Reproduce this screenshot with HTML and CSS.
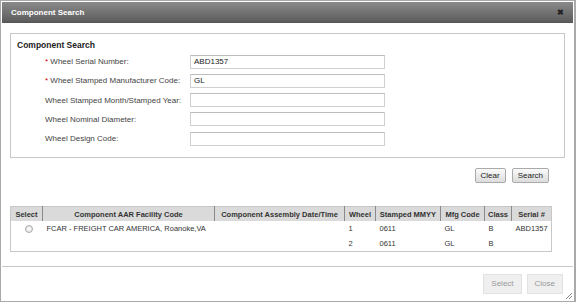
FILE: index.html
```html
<!DOCTYPE html>
<html lang="en">
<head>
  <meta charset="UTF-8" />
  <title>Component Search</title>
  <link rel="stylesheet" href="styles.css">
</head>
<body>
  <div class="dialog">
    <div class="titlebar">
      <span class="title">Component Search</span>
      <span class="close">&#10006;</span>
    </div>

    <div class="content">
      <fieldset class="search-box">
        <div class="legend">Component Search</div>
        <div class="row">
          <label><span class="req">*</span> Wheel Serial Number:</label>
          <input type="text" value="ABD1357" />
        </div>
        <div class="row">
          <label><span class="req">*</span> Wheel Stamped Manufacturer Code:</label>
          <input type="text" value="GL" />
        </div>
        <div class="row">
          <label>Wheel Stamped Month/Stamped Year:</label>
          <input type="text" />
        </div>
        <div class="row">
          <label>Wheel Nominal Diameter:</label>
          <input type="text" />
        </div>
        <div class="row">
          <label>Wheel Design Code:</label>
          <input type="text" />
        </div>
      </fieldset>

      <div class="actions">
        <button class="btn">Clear</button>
        <button class="btn">Search</button>
      </div>

      <table class="results">
        <thead>
          <tr>
            <th class="c-select">Select</th>
            <th class="c-aar">Component AAR Facility Code</th>
            <th class="c-date">Component Assembly Date/Time</th>
            <th class="c-wheel">Wheel</th>
            <th class="c-mmyy">Stamped MMYY</th>
            <th class="c-mfg">Mfg Code</th>
            <th class="c-class">Class</th>
            <th class="c-serial">Serial #</th>
          </tr>
        </thead>
        <tbody>
          <tr>
            <td class="radio-cell"><span class="radio"></span></td>
            <td>FCAR - FREIGHT CAR AMERICA, Roanoke,VA</td>
            <td></td>
            <td>1</td>
            <td>0611</td>
            <td>GL</td>
            <td>B</td>
            <td>ABD1357</td>
          </tr>
          <tr>
            <td></td>
            <td></td>
            <td></td>
            <td>2</td>
            <td>0611</td>
            <td>GL</td>
            <td>B</td>
            <td></td>
          </tr>
        </tbody>
      </table>
    </div>

    <div class="footer">
      <button class="btn btn-flat">Select</button>
      <button class="btn btn-flat">Close</button>
      <span class="grip"></span>
    </div>
  </div>
</body>
</html>
```

FILE: styles.css
```css
html, body {
  margin: 0;
  height: 100%;
  background: #fff;
}

body {
  font-family: 'Liberation Sans', Arial, sans-serif;
  font-size: 8px;
  color: #222;
}

.dialog {
  box-sizing: border-box;
  width: 576px;
  height: 302px;
  border: 1px solid #a9a9a9;
  border-right-width: 2px;
  padding: 1px;
  display: flex;
  flex-direction: column;
  position: relative;
}

.titlebar {
  height: 20px;
  background: linear-gradient(#8a8a8a, #5c5c5c);
  border-bottom: 1px solid #555;
  display: flex;
  align-items: center;
  justify-content: space-between;
  padding: 0 9px 0 9px;
  color: #fff;
}

.title {
  font-weight: bold;
  font-size: 8px;
}

.close {
  color: #222;
  font-size: 8px;
  font-weight: bold;
}

.content {
  flex: 1;
  padding: 10px 8px 0 8px;
}

.search-box {
  margin: 0;
  border: 1px solid #c8c8c8;
  padding: 6px 0 9px 6px;
  width: 555px;
  box-sizing: border-box;
}

.legend {
  font-weight: bold;
  font-size: 8.5px;
  color: #222;
  margin-bottom: 2px;
}

.row {
  display: flex;
  align-items: center;
  height: 19.25px;
}

.row label {
  width: 145px;
  padding-left: 28px;
  color: #444;
}

.req {
  color: #c00;
}

.row input {
  box-sizing: border-box;
  width: 195px;
  height: 14px;
  border: 1px solid #d0d0d0;
  border-top-color: #bcbcbc;
  font-family: inherit;
  font-size: 8px;
  padding: 0 3px;
  color: #222;
}

.actions {
  display: flex;
  justify-content: flex-end;
  gap: 6px;
  padding: 10px 16px 0 0;
  height: 15px;
}

.btn {
  font-family: inherit;
  font-size: 8px;
  color: #222;
  padding: 0 5px;
  height: 15px;
  border: 1px solid #aaa;
  border-radius: 2px;
  background: linear-gradient(#fafafa, #dcdcdc);
}

.results {
  margin-top: 23px;
  width: 542px;
  border-collapse: collapse;
  border: 1px solid #c8c8c8;
  font-size: 7.5px;
}

.results th {
  background: #dadada;
  font-weight: bold;
  color: #333;
  height: 14px;
  padding: 0;
  border-right: 1px solid #8a8a8a;
  text-align: center;
}

.results th:last-child {
  border-right: 1px solid #c8c8c8;
}

.results td {
  height: 15px;
  padding: 0 0 0 4px;
  color: #333;
}

.c-select { width: 31px; }
.c-aar { width: 171px; }
.c-date { width: 129px; }
.c-wheel { width: 30px; }
.c-mmyy { width: 64px; }
.c-mfg { width: 43px; }
.c-class { width: 26px; }

.radio-cell {
  text-align: center;
}

.radio {
  display: inline-block;
  width: 6px;
  height: 6px;
  border-radius: 50%;
  border: 1px solid #aaa;
  background: radial-gradient(#fff, #ddd);
  vertical-align: middle;
}

.footer {
  border-top: 1px solid #c8c8c8;
  height: 33px;
  display: flex;
  align-items: center;
  justify-content: flex-end;
  gap: 5px;
  padding-right: 10px;
}

.btn-flat {
  height: 20px;
  padding: 0 7px;
  border: 1px solid #e2e2e2;
  border-radius: 0;
  background: #efefef;
  color: #999;
}

.grip {
  position: absolute;
  right: 2px;
  bottom: 2px;
  width: 6px;
  height: 6px;
  background: linear-gradient(135deg, transparent 45%, #888 45%, #888 55%, transparent 55%, transparent 70%, #888 70%, #888 80%, transparent 80%);
}
```
